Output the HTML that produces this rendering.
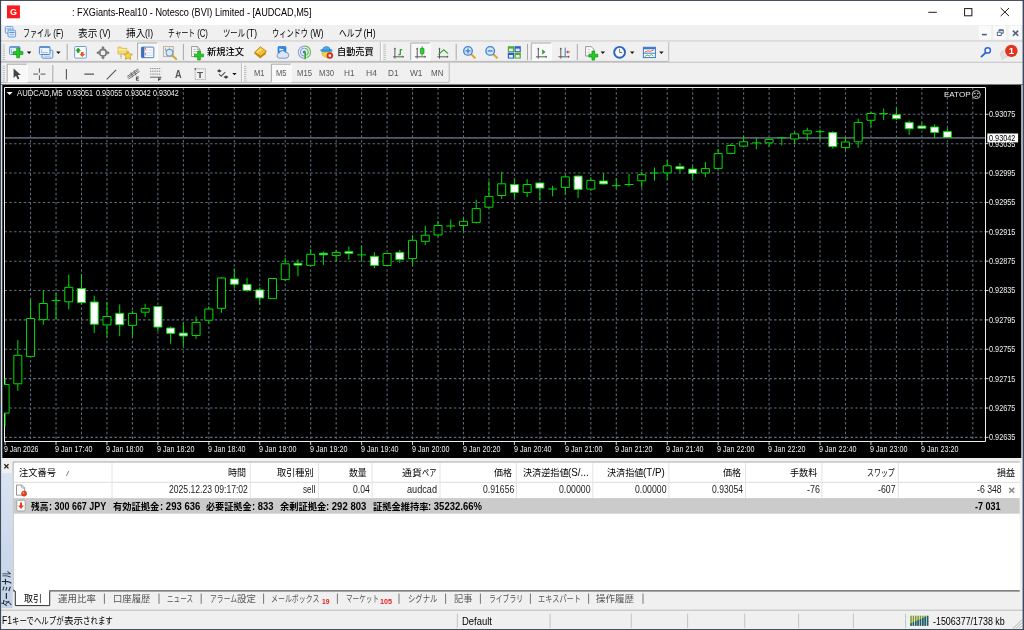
<!DOCTYPE html>
<html lang="ja"><head><meta charset="utf-8"><title>FXGiants-Real10 - Notesco (BVI) Limited - [AUDCAD,M5]</title>
<style>
html,body{margin:0;padding:0;background:#fff;}
body{width:1024px;height:630px;overflow:hidden;position:relative;font-family:"Liberation Sans","Noto Sans CJK JP",sans-serif;}
#win{will-change:transform;position:absolute;left:0;top:0;width:1024px;height:630px;overflow:hidden;background:#f0f0f0;}
.t{position:absolute;white-space:pre;line-height:1;transform-origin:0 0;display:inline-block;}
.bm{display:inline-block;width:0;height:0;}
.r{display:inline-block;transform-origin:0 0;white-space:pre;}
.a{position:absolute;}
svg{position:absolute;overflow:visible;}
svg.chart{left:0;top:85px;overflow:hidden;}
</style></head>
<body>
<div id="win">
<div id="titlebar" class="a" style="left:0;top:0;width:1024px;height:24.7px;background:#fff">
<svg style="left:6px;top:4px" width="16" height="16" viewBox="6 4 16 16" ><rect x="7" y="5.4" width="12.9" height="12.9" fill="#fb1a1e"/><text x="13.4" y="14.7" font-size="9" font-weight="bold" fill="#fff" text-anchor="middle" font-family="'Liberation Sans','Noto Sans CJK JP',sans-serif">G</text></svg>
<span class="t" style="left:72.00px;top:6.90px;font-size:11px;color:#000;"><span class="r" style="width:239.50px;transform:scaleX(0.8318)">: FXGiants-Real10 - Notesco (BVI) Limited - [AUDCAD,M5]</span></span>
<svg style="left:920px;top:0px" width="100" height="24" viewBox="920 0 100 24" ><g stroke="#111" stroke-width="0.95" fill="none"><path d="M928.3 12.3H936.8"/><rect x="964.6" y="8.6" width="7.3" height="7.2"/><path d="M1000.7 8L1009 16.1M1009 8L1000.7 16.1"/></g></svg>
</div>
<div id="menubar" class="a" style="left:0;top:24.7px;width:1024px;height:15.7px;background:#f0f0f0">
</div>
<svg style="left:4px;top:25px" width="14" height="14" viewBox="4 25 14 14" ><g fill="#eaf2fc" stroke="#5b8fd6" stroke-width="0.9"><rect x="5.3" y="26.6" width="7.6" height="6.6" rx="1"/><rect x="8" y="30.2" width="7.6" height="6.8" rx="1"/></g><path d="M6.5 29h5M9.3 32.4h5.2" stroke="#5b8fd6" stroke-width="1.1"/><path d="M9.6 34.6h4.6" stroke="#9cc0ee" stroke-width="1.6"/></svg>
<span class="t" style="left:23.00px;top:28.60px;font-size:10px;color:#000;"><span class="r" style="width:28.04px;transform:scaleX(0.7011)">ファイル</span><span class="r" style="width:12.46px;transform:scaleX(0.8012)"> (F)</span></span>
<span class="t" style="left:78.00px;top:28.60px;font-size:10px;color:#000;"><span class="r" style="width:19.31px;transform:scaleX(0.9656)">表示</span><span class="r" style="width:13.69px;transform:scaleX(0.8497)"> (V)</span></span>
<span class="t" style="left:126.00px;top:28.60px;font-size:10px;color:#000;"><span class="r" style="width:19.42px;transform:scaleX(0.9711)">挿入</span><span class="r" style="width:8.08px;transform:scaleX(0.8546)">(I)</span></span>
<span class="t" style="left:168.00px;top:28.60px;font-size:10px;color:#000;"><span class="r" style="width:27.07px;transform:scaleX(0.6784)">チャート</span><span class="r" style="width:12.93px;transform:scaleX(0.7753)"> (C)</span></span>
<span class="t" style="left:222.50px;top:28.60px;font-size:10px;color:#000;"><span class="r" style="width:21.98px;transform:scaleX(0.7327)">ツール</span><span class="r" style="width:13.02px;transform:scaleX(0.8374)"> (T)</span></span>
<span class="t" style="left:272.00px;top:28.60px;font-size:10px;color:#000;"><span class="r" style="width:35.97px;transform:scaleX(0.7194)">ウィンドウ</span><span class="r" style="width:15.53px;transform:scaleX(0.8222)"> (W)</span></span>
<span class="t" style="left:338.50px;top:28.60px;font-size:10px;color:#000;"><span class="r" style="width:22.93px;transform:scaleX(0.7645)">ヘルプ</span><span class="r" style="width:14.57px;transform:scaleX(0.8737)"> (H)</span></span>
<svg style="left:976px;top:25px" width="48" height="16" viewBox="976 25 48 16" ><g fill="#fafafa"><rect x="978.8" y="26" width="12.3" height="13.4"/><rect x="993.7" y="26" width="12.4" height="13.4"/><rect x="1008.9" y="26" width="12.4" height="13.4"/></g><g stroke="#4d6384" fill="none"><path d="M981.9 34.6h4.9" stroke-width="1.6"/><path d="M997.3 32.2h4v3.3h-4z" stroke-width="1"/><path d="M999 31.6v-1.6h4.2v3.3h-1.6" stroke-width="1"/><path d="M998.8 30.1h4.6" stroke-width="1.3"/><path d="M1012.9 30.6l5.3 5.2M1018.2 30.6l-5.3 5.2" stroke-width="1.6"/></g></svg>
<div class="a" style="left:0px;top:40.4px;width:1024px;height:0.8px;background:#fff"></div>
<div class="a" style="left:0px;top:62px;width:1024px;height:0.8px;background:#fff"></div>
<svg style="left:0px;top:40px" width="1024" height="23" viewBox="0 40 1024 23" ><path d="M0 40.9H1024" stroke="#c4c4c4" stroke-width="1"/><path d="M0 61.4H668.7V42" stroke="#b4b4b4" stroke-width="0.9" fill="none"/><path d="M380.4 42V61" stroke="#b4b4b4" stroke-width="0.9"/><path d="M381.4 42V61" stroke="#fff" stroke-width="0.9"/><rect x="2.6" y="44.4" width="2.4" height="0.9" fill="#b8b8b8"/><rect x="2.6" y="46.5" width="2.4" height="0.9" fill="#b8b8b8"/><rect x="2.6" y="48.6" width="2.4" height="0.9" fill="#b8b8b8"/><rect x="2.6" y="50.7" width="2.4" height="0.9" fill="#b8b8b8"/><rect x="2.6" y="52.8" width="2.4" height="0.9" fill="#b8b8b8"/><rect x="2.6" y="54.9" width="2.4" height="0.9" fill="#b8b8b8"/><rect x="2.6" y="57.0" width="2.4" height="0.9" fill="#b8b8b8"/><rect x="2.6" y="59.1" width="2.4" height="0.9" fill="#b8b8b8"/><rect x="383.4" y="44.4" width="2.4" height="0.9" fill="#b8b8b8"/><rect x="383.4" y="46.5" width="2.4" height="0.9" fill="#b8b8b8"/><rect x="383.4" y="48.6" width="2.4" height="0.9" fill="#b8b8b8"/><rect x="383.4" y="50.7" width="2.4" height="0.9" fill="#b8b8b8"/><rect x="383.4" y="52.8" width="2.4" height="0.9" fill="#b8b8b8"/><rect x="383.4" y="54.9" width="2.4" height="0.9" fill="#b8b8b8"/><rect x="383.4" y="57.0" width="2.4" height="0.9" fill="#b8b8b8"/><rect x="383.4" y="59.1" width="2.4" height="0.9" fill="#b8b8b8"/><rect x="9.6" y="46.6" width="10.4" height="7.9" rx="1" fill="#e6f0fb" stroke="#5b8fd6" stroke-width="1"/><path d="M9.6 47.3h10.4" stroke="#6b9be0" stroke-width="1.5"/><path d="M11.5 49.2v3.8h4" stroke="#7aa0cc" stroke-width="0.7" fill="none"/><path d="M16.700000000000003 48.2h2.8v3.4h3.4v2.8h-3.4v3.4h-2.8v-3.4h-3.4v-2.8h3.4z" fill="#22cc22" stroke="#0f9414" stroke-width="0.7" stroke-linejoin="round"/><path d="M26.9 51.6h4.4l-2.2 2.3z" fill="#111"/><rect x="42" y="50.2" width="10.8" height="8" rx="1" fill="#e6f0fb" stroke="#5b8fd6" stroke-width="1"/><rect x="39.4" y="46.6" width="10.6" height="7.9" rx="1" fill="#eef5fd" stroke="#4f86d0" stroke-width="1"/><path d="M39.4 47.3h10.6" stroke="#5a8fdc" stroke-width="1.5"/><path d="M41.4 49.4v3.2h6.4" stroke="#7aa0cc" stroke-width="0.7" fill="none"/><path d="M44.3 56.2h6.4" stroke="#9bbbe0" stroke-width="0.9" fill="none"/><path d="M56.2 51.6h4.4l-2.2 2.3z" fill="#111"/><path d="M67.2 43.9V60.2" stroke="#a8a8a8" stroke-width="1"/><rect x="74.7" y="46.5" width="11.6" height="11.6" rx="1" fill="#fff" stroke="#6a9edc" stroke-width="1"/><path d="M78.2 47.8l2.9 2.9h-1.6v2h-2.6v-2h-1.6z" fill="#1fa01f"/><path d="M82.3 57l2.9-2.9h-1.6v-2h-2.6v2h-1.6z" fill="#e8582a"/><g stroke="#7a7a7a" fill="none"><circle cx="103" cy="52.7" r="3.3" stroke-width="1.6"/><path d="M97.4 52.7h3.2M105.4 52.7h3.2M103 47.1v3.2M103 55.1v3.2" stroke-width="1.7"/></g><path d="M96.3 52.7l2.2-2v4zM109.7 52.7l-2.2-2v4zM103 46l-2 2.2h4zM103 59.4l-2-2.2h4z" fill="#7a7a7a"/><path d="M118 47.2h3.2l1 1.2h4.6v5.6H118z" fill="#f4dc78" stroke="#d8b43c" stroke-width="0.8"/><path d="M118.3 49.6h8.2" stroke="#fbf0b4" stroke-width="1"/><path d="M121 54.5v4" stroke="#444" stroke-width="0.8" stroke-dasharray="1 0.8"/><path d="M128.1 51.2l1.3 2.7 3 .4-2.2 2.1.5 3-2.6-1.4-2.7 1.4.5-3-2.1-2.1 3-.4z" fill="#f7d348" stroke="#c89a1c" stroke-width="0.8" stroke-linejoin="round"/><rect x="137.6" y="43" width="19.80000000000001" height="17.200000000000003" fill="#f8f8f8"/><path d="M137.6 60.2V43H157.4" stroke="#a0a0a0" stroke-width="0.9" fill="none"/><path d="M157.4 43V60.2H137.6" stroke="#fff" stroke-width="0.9" fill="none"/><rect x="141.4" y="47.1" width="12.4" height="10.6" rx="0.8" fill="#fff" stroke="#4a7ec4" stroke-width="1"/><rect x="141.4" y="47.1" width="3" height="10.6" fill="#3a6fb5"/><path d="M144.6 50.2h9M144.6 52.8h9M144.6 55.3h9" stroke="#c4d8f2" stroke-width="0.9"/><rect x="144.9" y="48.3" width="1.2" height="1.2" fill="#e03030"/><rect x="144.9" y="53.4" width="1.2" height="1.2" fill="#e03030"/><rect x="163.5" y="46.6" width="9.8" height="10" fill="#f4efe2" stroke="#b8ae94" stroke-width="0.9"/><path d="M165.5 48v3M169.3 47.6v2.4" stroke="#888" stroke-width="0.7"/><circle cx="169.5" cy="52.7" r="3.3" fill="#d8e8f8" fill-opacity="0.85" stroke="#6a9edc" stroke-width="1.2"/><path d="M172 55.3l4.2 3.7" stroke="#d2a52c" stroke-width="1.9" stroke-linecap="round"/><path d="M183.4 43.9V60.2" stroke="#a8a8a8" stroke-width="1"/><path d="M191.6 46.6h5.6l2.8 2.8v7.2h-8.4z" fill="#fff" stroke="#8a8a8a" stroke-width="0.9"/><path d="M197.2 46.6v2.8h2.8" fill="none" stroke="#8a8a8a" stroke-width="0.7"/><path d="M193.3 49.4h2.6M193.3 51.4h3.6M193.3 53.4h2" stroke="#a8a8a8" stroke-width="0.8"/><path d="M197.65 51.0h2.7v3.15h3.15v2.7h-3.15v3.15h-2.7v-3.15h-3.15v-2.7h3.15z" fill="#22cc22" stroke="#0f9414" stroke-width="0.7" stroke-linejoin="round"/><path d="M254 53.2l6.2-6.2 6.3 4.6-1 2.6-5.3 4.4z" fill="#c48c20"/><path d="M254.6 52.2l5.8-5.4 6 4.4-5.6 5z" fill="#f0c02c" stroke="#b47c18" stroke-width="0.7"/><path d="M256.2 52.2l4.4-4 1.6 1.2-4.4 4z" fill="#f8dc70"/><rect x="278" y="46.5" width="8" height="7" rx="0.8" fill="#2a8ae6" stroke="#1a6cc8" stroke-width="0.6"/><path d="M280 48.4v2.6M280.3 49.6h3" stroke="#fff" stroke-width="1"/><path d="M279 58.2a2.6 2.6 0 0 1 .3-5.1 3.4 3.4 0 0 1 6.2-.7 2.9 2.9 0 0 1 3.2 2.9 2.8 2.8 0 0 1-2.7 2.9z" fill="#dde7f3" stroke="#6f90c4" stroke-width="0.9"/><g fill="none" stroke-width="1.15"><path d="M304.4 58.3a6.1 6.1 0 0 1 0-12.2" stroke="#93a9d4"/><path d="M304.4 56a3.9 3.9 0 0 1 0-7.8" stroke="#7f9fdc"/><path d="M304.4 46.1a6.1 6.1 0 0 1 2.4 11.7" stroke="#62bc62"/><path d="M304.4 48.2a3.9 3.9 0 0 1 2.2 7" stroke="#62bc62"/></g><circle cx="304.3" cy="52" r="1.6" fill="#3a78d0"/><path d="M305.2 52.8v5.6" stroke="#2fa82f" stroke-width="1.7" stroke-linecap="round"/><path d="M321.5 51.2l1.2 4.4 5 2.6 3.4-2.4.6-4.6z" fill="#f2d04a" stroke="#d0a420" stroke-width="0.6"/><ellipse cx="326.4" cy="50.3" rx="6.2" ry="1.9" fill="#3f9edc"/><path d="M322.6 50.2a3.8 3.6 0 0 1 7.6 0z" fill="#4aa8e4" stroke="#2a7cc0" stroke-width="0.6"/><circle cx="329.9" cy="55.6" r="3" fill="#e03020" stroke="#b81c10" stroke-width="0.5"/><rect x="328.7" y="54.4" width="2.4" height="2.4" fill="#fff"/><path d="M394.9 48.4V58.6M393 56.8H403.4" stroke="#5a5a5a" stroke-width="1" fill="none"/><path d="M394.9 47.6l-1.2 1.6h2.4zM404.2 56.8l-1.6-1.2v2.4z" fill="#5a5a5a"/><path d="M400.3 49.3v5.8M400.3 49.6h1.8M398.4 54.6h1.9" stroke="#22a022" stroke-width="1.2" fill="none"/><rect x="410.7" y="43" width="19.30000000000001" height="17.200000000000003" fill="#f8f8f8"/><path d="M410.7 60.2V43H430" stroke="#a0a0a0" stroke-width="0.9" fill="none"/><path d="M430 43V60.2H410.7" stroke="#fff" stroke-width="0.9" fill="none"/><path d="M417.2 48.4V58.6M415 56.8H425.4" stroke="#5a5a5a" stroke-width="1" fill="none"/><path d="M417.2 47.6l-1.2 1.6h2.4zM426.2 56.8l-1.6-1.2v2.4z" fill="#5a5a5a"/><path d="M422.1 46.4v9.4" stroke="#22a022" stroke-width="1"/><rect x="420.3" y="48.3" width="3.7" height="5.4" rx="0.6" fill="#2fd02f" stroke="#159015" stroke-width="0.7"/><path d="M439.5 48.4V58.6M437.4 56.8H447.8" stroke="#5a5a5a" stroke-width="1" fill="none"/><path d="M439.5 47.6l-1.2 1.6h2.4zM448.6 56.8l-1.6-1.2v2.4z" fill="#5a5a5a"/><path d="M438.4 54.6l5.3-4.9 4.4 3.9" stroke="#32a832" stroke-width="1.2" fill="none"/><path d="M456.2 43.9V60.2" stroke="#a8a8a8" stroke-width="1"/><path d="M471.4 54.4l3.4 3.4" stroke="#d6ac34" stroke-width="2.1" stroke-linecap="round"/><circle cx="468" cy="50.9" r="4.3" fill="#d4e6f8" stroke="#3d80d2" stroke-width="1.3"/><path d="M465.5 50.9h5" stroke="#3d80d2" stroke-width="1.3"/><path d="M468 48.4v5" stroke="#3d80d2" stroke-width="1.3"/><path d="M493.59999999999997 54.4l3.4 3.4" stroke="#d6ac34" stroke-width="2.1" stroke-linecap="round"/><circle cx="490.2" cy="50.9" r="4.3" fill="#d4e6f8" stroke="#3d80d2" stroke-width="1.3"/><path d="M487.7 50.9h5" stroke="#3d80d2" stroke-width="1.3"/><rect x="507.8" y="46.2" width="6.3" height="6" fill="#52a836"/><rect x="514.5" y="46.2" width="6.3" height="6" fill="#2b60c4"/><rect x="507.8" y="52.6" width="6.3" height="6" fill="#2b60c4"/><rect x="514.5" y="52.6" width="6.3" height="6" fill="#52a836"/><g fill="#e4eefa"><rect x="509" y="48.6" width="3.9" height="2.6"/><rect x="515.7" y="48.6" width="3.9" height="2.6"/><rect x="509" y="55" width="3.9" height="2.6"/><rect x="515.7" y="55" width="3.9" height="2.6"/></g><path d="M527.5 43.9V60.2" stroke="#a8a8a8" stroke-width="1"/><rect x="531.3" y="43" width="19.90000000000009" height="17.200000000000003" fill="#f8f8f8"/><path d="M531.3 60.2V43H551.2" stroke="#a0a0a0" stroke-width="0.9" fill="none"/><path d="M551.2 43V60.2H531.3" stroke="#fff" stroke-width="0.9" fill="none"/><path d="M538.3 48.4V58.6M536 56.8H546.5" stroke="#5a5a5a" stroke-width="1" fill="none"/><path d="M538.3 47.6l-1.2 1.6h2.4zM547.3 56.8l-1.6-1.2v2.4z" fill="#5a5a5a"/><path d="M542.2 49.2l3.3 2.8-3.3 2.8z" fill="#2aa82a"/><path d="M560.8 48.4V58.6M558.4 56.8H568.9" stroke="#5a5a5a" stroke-width="1" fill="none"/><path d="M560.8 47.6l-1.2 1.6h2.4zM569.6999999999999 56.8l-1.6-1.2v2.4z" fill="#5a5a5a"/><path d="M565.2 47.6v8.4" stroke="#3a78c8" stroke-width="1"/><path d="M566 52l2.2-1.8v1.2h1.6v1.2h-1.6v1.2z" fill="#d8481c"/><path d="M577.3 43.9V60.2" stroke="#a8a8a8" stroke-width="1"/><path d="M585.6 46.6h5.4l3 2.8v6.6h-8.4z" fill="#fff" stroke="#8a8a8a" stroke-width="0.9"/><path d="M587.6 49.6c1 -1.6 1.6 1.6 2.6 0M587.6 52.4c1 -1.6 1.6 1.6 2.6 0" stroke="#999" stroke-width="0.7" fill="none"/><path d="M591.9499999999999 51.1h2.7v3.15h3.15v2.7h-3.15v3.15h-2.7v-3.15h-3.15v-2.7h3.15z" fill="#22cc22" stroke="#0f9414" stroke-width="0.7" stroke-linejoin="round"/><path d="M600.6 51.6h4.4l-2.2 2.3z" fill="#111"/><circle cx="619.6" cy="52.3" r="5.4" fill="#f6f9fd" stroke="#2a62c4" stroke-width="1.9"/><path d="M619.6 48.8v3.7h2.6" stroke="#555" stroke-width="0.8" fill="none"/><path d="M630 51.6h4.4l-2.2 2.3z" fill="#111"/><rect x="643.4" y="47.3" width="12" height="10.3" fill="#fff" stroke="#3a78cc" stroke-width="1"/><rect x="643.4" y="47.3" width="12" height="2" fill="#3a78cc"/><path d="M643.4 53.2h12" stroke="#3a78cc" stroke-width="1"/><path d="M644.8 52.2l3-1.4 2.4.6 3.6-1.4" stroke="#d8502c" stroke-width="0.9" fill="none"/><path d="M644.8 56.6l2.4-1.6 2 1 2-1.4 2.4 1.6" stroke="#38a838" stroke-width="0.9" fill="none"/><path d="M659.2 51.6h4.4l-2.2 2.3z" fill="#111"/><circle cx="987.7" cy="50.4" r="2.7" fill="#f4f8fe" stroke="#2f64d4" stroke-width="1.5"/><path d="M985.7 52.6l-4.2 4" stroke="#2f64d4" stroke-width="1.9" stroke-linecap="round"/><path d="M1000.6 54.2a3.8 3.4 0 0 1 7.6 0a3.8 3.4 0 0 1-3.6 3.4l-2.4 2v-2.2a3.8 3.4 0 0 1-1.6-3.2z" fill="#e2e2e2" stroke="#c0c0c0" stroke-width="0.5"/><circle cx="1011.4" cy="50.9" r="6.2" fill="#e2331f"/><text x="1011.4" y="54.3" font-size="9.5" font-weight="bold" fill="#fff" text-anchor="middle" font-family="'Liberation Sans','Noto Sans CJK JP',sans-serif">1</text></svg>
<span class="t" style="left:206.80px;top:47.20px;font-size:9.5px;color:#000;font-weight:500;"><span class="r" style="width:37.00px;transform:scaleX(0.9733)">新規注文</span></span>
<span class="t" style="left:337.40px;top:47.20px;font-size:9.5px;color:#000;font-weight:500;"><span class="r" style="width:36.60px;transform:scaleX(0.9628)">自動売買</span></span>
<svg style="left:0px;top:62px" width="1024" height="23" viewBox="0 62 1024 23" ><path d="M0 62.3H1024" stroke="#b8b8b8" stroke-width="0.9"/><path d="M0 83.2H1024" stroke="#fff" stroke-width="1"/><path d="M0 84.4H1024" stroke="#6e6e6e" stroke-width="1"/><path d="M0 82.4H449.2V63" stroke="#b4b4b4" stroke-width="0.9" fill="none"/><path d="M241.6 63V82" stroke="#b4b4b4" stroke-width="0.9"/><path d="M242.6 63V82" stroke="#fff" stroke-width="0.9"/><rect x="2.6" y="65.8" width="2.4" height="0.9" fill="#b8b8b8"/><rect x="2.6" y="67.9" width="2.4" height="0.9" fill="#b8b8b8"/><rect x="2.6" y="70.0" width="2.4" height="0.9" fill="#b8b8b8"/><rect x="2.6" y="72.1" width="2.4" height="0.9" fill="#b8b8b8"/><rect x="2.6" y="74.2" width="2.4" height="0.9" fill="#b8b8b8"/><rect x="2.6" y="76.3" width="2.4" height="0.9" fill="#b8b8b8"/><rect x="2.6" y="78.4" width="2.4" height="0.9" fill="#b8b8b8"/><rect x="2.6" y="80.5" width="2.4" height="0.9" fill="#b8b8b8"/><rect x="244" y="65.8" width="2.4" height="0.9" fill="#b8b8b8"/><rect x="244" y="67.9" width="2.4" height="0.9" fill="#b8b8b8"/><rect x="244" y="70.0" width="2.4" height="0.9" fill="#b8b8b8"/><rect x="244" y="72.1" width="2.4" height="0.9" fill="#b8b8b8"/><rect x="244" y="74.2" width="2.4" height="0.9" fill="#b8b8b8"/><rect x="244" y="76.3" width="2.4" height="0.9" fill="#b8b8b8"/><rect x="244" y="78.4" width="2.4" height="0.9" fill="#b8b8b8"/><rect x="244" y="80.5" width="2.4" height="0.9" fill="#b8b8b8"/><rect x="7.2" y="64.2" width="20.0" height="17.799999999999997" fill="#f8f8f8"/><path d="M7.2 82V64.2H27.2" stroke="#a0a0a0" stroke-width="0.9" fill="none"/><path d="M27.2 64.2V82H7.2" stroke="#fff" stroke-width="0.9" fill="none"/><path d="M13.6 68.4v9.6l2.4-2.2 1.7 3.6 1.7-.8-1.7-3.5h3.2z" fill="#444"/><path d="M39.4 68.4v4.4M39.4 75.4v4.6M33.3 74.1h4.8M40.6 74.1h4.8" stroke="#555" stroke-width="1" fill="none"/><path d="M52.8 65V82" stroke="#a8a8a8" stroke-width="1"/><path d="M66.4 68.9v10.5M84.4 74.1h9.6" stroke="#555" stroke-width="1.1"/><path d="M106.7 79.3l9.4-9.4" stroke="#555" stroke-width="1.1"/><g stroke="#666" stroke-width="0.9" fill="none"><path d="M127.2 76.4l11-7.6M128.6 79l11-7.6M127.6 77.8l11-7.6"/><path d="M130.8 72.4l2 5M134 70.4l2 5"/></g><path d="M136.2 77h2.8M136.2 78.6h2.2M136.2 80.2h2.8M136.4 77v3.2" stroke="#444" stroke-width="0.9" fill="none"/><g stroke="#777" stroke-width="0.9"><path d="M150 68.6h11.2M150 71.2h11.2M150 74.1h11.2" stroke-dasharray="1.3 0.9"/><path d="M150 77.2h11.2" stroke="#555"/></g><path d="M158.4 78h2.8M158.4 79.5h2.2M158.6 78v3" stroke="#444" stroke-width="0.9" fill="none"/><rect x="195.2" y="68.8" width="10.2" height="10.8" fill="none" stroke="#888" stroke-width="0.8" stroke-dasharray="1.1 0.9"/><rect x="194.6" y="68.2" width="1.5" height="1.5" fill="#555"/><path d="M219.3 69.2l2.4 1.7-2.4 1.7-2.4-1.7zM226 75.4l2.6 1.7-2.6 1.7-2.6-1.7z" fill="#444"/><path d="M219 74.2l2.2 2 4-4" stroke="#555" stroke-width="1.1" fill="none"/><path d="M232.2 73h4.4l-2.2 2.3z" fill="#111"/><rect x="271.4" y="64.2" width="19.600000000000023" height="17.799999999999997" fill="#f8f8f8"/><path d="M271.4 82V64.2H291" stroke="#a0a0a0" stroke-width="0.9" fill="none"/><path d="M291 64.2V82H271.4" stroke="#fff" stroke-width="0.9" fill="none"/></svg>
<span class="t" style="left:174.70px;top:69.60px;font-size:10.4px;color:#555;font-weight:bold;"><span class="r" style="width:6.60px;transform:scaleX(0.8782)">A</span></span>
<span class="t" style="left:197.30px;top:70.30px;font-size:9.6px;color:#555;font-weight:bold;"><span class="r" style="width:6.10px;transform:scaleX(1.0383)">T</span></span>
<span class="t" style="left:253.50px;top:69.20px;font-size:8.5px;color:#585858;"><span class="r" style="width:10.50px;transform:scaleX(0.8889)">M1</span></span>
<span class="t" style="left:276.00px;top:69.20px;font-size:8.5px;color:#585858;"><span class="r" style="width:10.50px;transform:scaleX(0.8889)">M5</span></span>
<span class="t" style="left:296.50px;top:69.20px;font-size:8.5px;color:#585858;"><span class="r" style="width:15.00px;transform:scaleX(0.9065)">M15</span></span>
<span class="t" style="left:318.50px;top:69.20px;font-size:8.5px;color:#585858;"><span class="r" style="width:15.00px;transform:scaleX(0.9065)">M30</span></span>
<span class="t" style="left:343.50px;top:69.20px;font-size:8.5px;color:#585858;"><span class="r" style="width:10.50px;transform:scaleX(0.9655)">H1</span></span>
<span class="t" style="left:365.50px;top:69.20px;font-size:8.5px;color:#585858;"><span class="r" style="width:11.00px;transform:scaleX(1.0115)">H4</span></span>
<span class="t" style="left:388.00px;top:69.20px;font-size:8.5px;color:#585858;"><span class="r" style="width:10.50px;transform:scaleX(0.9655)">D1</span></span>
<span class="t" style="left:410.00px;top:69.20px;font-size:8.5px;color:#585858;"><span class="r" style="width:12.50px;transform:scaleX(0.9804)">W1</span></span>
<span class="t" style="left:431.00px;top:69.20px;font-size:8.5px;color:#585858;"><span class="r" style="width:12.50px;transform:scaleX(0.9445)">MN</span></span>
<svg class="chart" width="1024" height="374" viewBox="0 85 1024 374">
<rect x="0" y="85" width="1024" height="374" fill="#f0f0f0"/>
<rect x="2.3" y="85" width="1019" height="373" fill="#000"/>
<path d="M4.5 114.30H986M4.5 143.67H986M4.5 173.04H986M4.5 202.41H986M4.5 231.78H986M4.5 261.15H986M4.5 290.52H986M4.5 319.89H986M4.5 349.26H986M4.5 378.63H986M4.5 408.00H986M4.5 437.37H986M30.57 87.5V441.5M56.03 87.5V441.5M81.50 87.5V441.5M106.96 87.5V441.5M132.43 87.5V441.5M157.90 87.5V441.5M183.36 87.5V441.5M208.83 87.5V441.5M234.29 87.5V441.5M259.76 87.5V441.5M285.23 87.5V441.5M310.69 87.5V441.5M336.16 87.5V441.5M361.62 87.5V441.5M387.09 87.5V441.5M412.56 87.5V441.5M438.02 87.5V441.5M463.49 87.5V441.5M488.95 87.5V441.5M514.42 87.5V441.5M539.89 87.5V441.5M565.35 87.5V441.5M590.82 87.5V441.5M616.28 87.5V441.5M641.75 87.5V441.5M667.22 87.5V441.5M692.68 87.5V441.5M718.15 87.5V441.5M743.61 87.5V441.5M769.08 87.5V441.5M794.55 87.5V441.5M820.01 87.5V441.5M845.48 87.5V441.5M870.94 87.5V441.5M896.41 87.5V441.5M921.88 87.5V441.5M947.34 87.5V441.5M972.81 87.5V441.5" stroke="#5e6c7e" stroke-width="1.05" stroke-dasharray="2.5 2.28" fill="none"/>
<path d="M4.5 442V87.5H985.5V441.5H4.5" stroke="#f0f0f0" stroke-width="1" fill="none"/>
<path d="M5 137.8H985" stroke="#525e6e" stroke-width="1.7" fill="none"/>
<clipPath id="cc"><rect x="4" y="86" width="983" height="356"/></clipPath>
<g clip-path="url(#cc)" stroke="#00dc00" stroke-width="1" fill="none">
<path d="M5.10 378.30V384.40M5.10 413.20V426.70M17.83 340.00V355.20M17.83 383.90V390.80M30.57 299.40V318.40M43.30 290.50V303.40M43.30 319.70V324.80M56.03 292.50V319.70M51.63 300.60H60.43M68.77 274.50V287.20M68.77 301.90V309.50M81.50 274.50V288.40M81.50 302.70V304.40M94.23 295.60V301.90M94.23 324.30V333.10M106.96 301.90V316.40M106.96 325.00V337.00M119.70 304.40V313.30M119.70 324.80V336.20M132.43 310.80V313.30M132.43 325.50V337.00M145.16 303.70V308.30M145.16 312.30V317.10M157.90 327.20V331.00M170.63 326.70V327.90M170.63 333.50V343.70M183.36 322.30V333.00M183.36 336.00V346.20M196.09 316.50V322.30M196.09 335.60V338.90M208.83 306.30V308.90M208.83 320.30V323.60M221.56 277.00V277.90M221.56 308.40V312.70M234.29 268.30V278.90M234.29 284.30V288.00M247.03 277.90V284.30M247.03 290.60V291.90M259.76 287.30V289.80M259.76 298.00V304.60M285.23 258.10V263.70M285.23 279.70V281.00M297.96 259.40V263.20M297.96 265.20V276.40M310.69 249.00V254.20M310.69 265.40V266.80M323.43 251.60V253.10M323.43 254.90V264.80M336.16 249.80V252.30M336.16 255.70V261.70M348.89 246.50V251.60M348.89 253.40V259.70M361.62 246.00V260.50M357.22 254.90H366.02M374.36 252.30V256.20M374.36 265.60V268.10M399.82 249.80V252.30M399.82 259.70V263.00M412.56 235.10V240.20M412.56 258.70V265.60M425.29 225.70V235.10M425.29 241.40V245.20M438.02 221.10V225.40M438.02 235.10V236.30M450.76 219.50V229.70M446.36 226.00H455.16M463.49 217.90V221.20M463.49 225.60V231.40M476.22 199.70V208.50M476.22 222.50V223.50M488.95 181.10V196.30M488.95 207.30V208.50M501.69 171.70V183.70M501.69 195.60V198.90M514.42 178.60V184.40M514.42 192.50V198.10M527.15 179.10V184.40M527.15 192.50V197.10M539.89 181.90V182.90M539.89 188.20V200.70M552.62 185.70V196.30M548.22 189.00H557.02M565.35 175.50V176.80M565.35 187.50V194.60M578.09 175.30V176.00M578.09 189.50V198.10M590.82 177.30V180.30M590.82 189.20V190.80M603.55 173.30V180.90M603.55 184.00V184.50M616.28 178.10V189.00M611.88 185.70H620.68M629.02 173.80V186.50M624.62 184.50H633.42M641.75 171.80V174.60M641.75 180.90V187.80M654.48 167.50V180.70M650.08 173.00H658.88M667.22 159.80V165.70M667.22 173.00V179.70M679.95 163.10V166.40M679.95 169.00V173.30M692.68 166.20V169.00M692.68 173.60V178.90M705.42 161.90V168.50M705.42 173.00V177.10M718.15 148.90V153.50M718.15 168.50V169.50M730.88 143.80V145.40M730.88 153.50V154.30M743.61 135.80V141.70M743.61 146.20V147.20M756.35 137.80V149.30M751.95 142.90H760.75M769.08 138.30V139.30M769.08 142.90V146.70M781.81 137.80V145.40M777.41 137.80H786.21M794.55 132.00V133.80M794.55 139.10V144.20M807.28 127.70V130.70M807.28 134.00V140.40M820.01 129.40V140.40M815.61 131.70H824.41M832.75 131.20V132.50M832.75 146.70V148.50M845.48 137.00V141.90M845.48 147.70V150.30M858.21 118.80V122.30M858.21 141.90V147.70M870.94 111.70V113.40M870.94 120.40V126.90M883.68 108.40V120.00M879.28 113.60H888.08M896.41 107.90V114.70M896.41 118.80V120.00M909.14 120.60V122.30M909.14 128.90V135.00M921.88 122.60V125.90M921.88 128.40V129.00M934.61 124.40V126.90M934.61 132.50V138.30M947.34 128.20V131.50M947.34 137.60V138.00"/>
<path d="M1.10 384.50H9.10V413.10H1.10ZM13.83 355.30H21.83V383.80H13.83ZM26.57 318.50H34.57V356.40H26.57ZM39.30 303.50H47.30V319.60H39.30ZM64.77 287.30H72.77V301.80H64.77ZM102.96 316.50H110.96V324.90H102.96ZM128.43 313.40H136.43V325.40H128.43ZM141.16 308.40H149.16V312.20H141.16ZM192.09 322.40H200.09V335.50H192.09ZM204.83 309.00H212.83V320.20H204.83ZM217.56 278.00H225.56V308.30H217.56ZM268.49 278.50H276.49V298.60H268.49ZM281.23 263.80H289.23V279.60H281.23ZM306.69 254.30H314.69V265.30H306.69ZM332.16 252.40H340.16V255.60H332.16ZM383.09 253.50H391.09V265.50H383.09ZM408.56 240.30H416.56V258.60H408.56ZM421.29 235.20H429.29V241.30H421.29ZM434.02 225.50H442.02V235.00H434.02ZM459.49 221.30H467.49V225.50H459.49ZM472.22 208.60H480.22V222.40H472.22ZM484.95 196.40H492.95V207.20H484.95ZM497.69 183.80H505.69V195.50H497.69ZM523.15 184.50H531.15V192.40H523.15ZM561.35 176.90H569.35V187.40H561.35ZM586.82 180.40H594.82V189.10H586.82ZM637.75 174.70H645.75V180.80H637.75ZM663.22 165.80H671.22V172.90H663.22ZM701.42 168.60H709.42V172.90H701.42ZM714.15 153.60H722.15V168.40H714.15ZM726.88 145.50H734.88V153.40H726.88ZM739.61 141.80H747.61V146.10H739.61ZM765.08 139.40H773.08V142.80H765.08ZM790.55 133.90H798.55V139.00H790.55ZM803.28 130.80H811.28V133.90H803.28ZM841.48 142.00H849.48V147.60H841.48ZM854.21 122.40H862.21V141.80H854.21ZM866.94 113.50H874.94V120.30H866.94Z" fill="#000"/>
<path d="M77.50 288.50H85.50V302.60H77.50ZM90.23 302.00H98.23V324.20H90.23ZM115.70 313.40H123.70V324.70H115.70ZM153.90 306.50H161.90V327.10H153.90ZM166.63 328.00H174.63V333.40H166.63ZM179.36 333.10H187.36V335.90H179.36ZM230.29 279.00H238.29V284.20H230.29ZM243.03 284.40H251.03V290.50H243.03ZM255.76 289.90H263.76V297.90H255.76ZM293.96 263.30H301.96V265.10H293.96ZM319.43 253.20H327.43V254.80H319.43ZM344.89 251.70H352.89V253.30H344.89ZM370.36 256.30H378.36V265.50H370.36ZM395.82 252.40H403.82V259.60H395.82ZM510.42 184.50H518.42V192.40H510.42ZM535.89 183.00H543.89V188.10H535.89ZM574.09 176.10H582.09V189.40H574.09ZM599.55 181.00H607.55V183.90H599.55ZM675.95 166.50H683.95V168.90H675.95ZM688.68 169.10H696.68V173.50H688.68ZM828.75 132.60H836.75V146.60H828.75ZM892.41 114.80H900.41V118.70H892.41ZM905.14 122.40H913.14V128.80H905.14ZM917.88 126.00H925.88V128.30H917.88ZM930.61 127.00H938.61V132.40H930.61ZM943.34 131.60H951.34V137.50H943.34Z" fill="#fff"/>
</g>
<path d="M986 114.30h2.4M986 143.67h2.4M986 173.04h2.4M986 202.41h2.4M986 231.78h2.4M986 261.15h2.4M986 290.52h2.4M986 319.89h2.4M986 349.26h2.4M986 378.63h2.4M986 408.00h2.4M986 437.37h2.4M5.10 442v3M56.03 442v3M106.96 442v3M157.90 442v3M208.83 442v3M259.76 442v3M310.69 442v3M361.62 442v3M412.56 442v3M463.49 442v3M514.42 442v3M565.35 442v3M616.28 442v3M667.22 442v3M718.15 442v3M769.08 442v3M820.01 442v3M870.94 442v3M921.88 442v3" stroke="#e8e8e8" stroke-width="0.9" fill="none"/>
<rect x="987.3" y="133.5" width="30.8" height="8.9" fill="#fff"/>
<path d="M6.6 92h6l-3 3z" fill="#fff"/>
<g stroke="#e8e8e8" stroke-width="0.8" fill="none"><circle cx="976.3" cy="94.6" r="4"/><path d="M974.4 97q1.9-2 3.8 0"/></g><circle cx="974.8" cy="93.5" r=".75" fill="#e8e8e8"/><circle cx="977.8" cy="93.5" r=".75" fill="#e8e8e8"/>
</svg>
<span class="t" style="left:16.60px;top:88.80px;font-size:8.4px;color:#f0f0f0;"><span class="r" style="width:45.50px;transform:scaleX(0.9224)">AUDCAD,M5</span></span>
<span class="t" style="left:67.40px;top:88.80px;font-size:8.4px;color:#f0f0f0;"><span class="r" style="width:26.00px;transform:scaleX(0.8586)">0.93051</span></span>
<span class="t" style="left:95.70px;top:88.80px;font-size:8.4px;color:#f0f0f0;"><span class="r" style="width:26.30px;transform:scaleX(0.8685)">0.93055</span></span>
<span class="t" style="left:124.60px;top:88.80px;font-size:8.4px;color:#f0f0f0;"><span class="r" style="width:25.80px;transform:scaleX(0.8520)">0.93042</span></span>
<span class="t" style="left:152.90px;top:88.80px;font-size:8.4px;color:#f0f0f0;"><span class="r" style="width:25.80px;transform:scaleX(0.8520)">0.93042</span></span>
<span class="t" style="left:943.80px;top:90.90px;font-size:7.8px;color:#f0f0f0;"><span class="r" style="width:26.50px;transform:scaleX(1.0304)">EATOP</span></span>
<span class="t" style="left:989.30px;top:110.20px;font-size:8.4px;color:#f0f0f0;"><span class="r" style="width:26.40px;transform:scaleX(0.8718)">0.93075</span></span>
<span class="t" style="left:989.30px;top:139.57px;font-size:8.4px;color:#f0f0f0;"><span class="r" style="width:26.40px;transform:scaleX(0.8718)">0.93035</span></span>
<span class="t" style="left:989.30px;top:168.94px;font-size:8.4px;color:#f0f0f0;"><span class="r" style="width:26.40px;transform:scaleX(0.8718)">0.92995</span></span>
<span class="t" style="left:989.30px;top:198.31px;font-size:8.4px;color:#f0f0f0;"><span class="r" style="width:26.40px;transform:scaleX(0.8718)">0.92955</span></span>
<span class="t" style="left:989.30px;top:227.68px;font-size:8.4px;color:#f0f0f0;"><span class="r" style="width:26.40px;transform:scaleX(0.8718)">0.92915</span></span>
<span class="t" style="left:989.30px;top:257.05px;font-size:8.4px;color:#f0f0f0;"><span class="r" style="width:26.40px;transform:scaleX(0.8718)">0.92875</span></span>
<span class="t" style="left:989.30px;top:286.42px;font-size:8.4px;color:#f0f0f0;"><span class="r" style="width:26.40px;transform:scaleX(0.8718)">0.92835</span></span>
<span class="t" style="left:989.30px;top:315.79px;font-size:8.4px;color:#f0f0f0;"><span class="r" style="width:26.40px;transform:scaleX(0.8718)">0.92795</span></span>
<span class="t" style="left:989.30px;top:345.16px;font-size:8.4px;color:#f0f0f0;"><span class="r" style="width:26.40px;transform:scaleX(0.8718)">0.92755</span></span>
<span class="t" style="left:989.30px;top:374.53px;font-size:8.4px;color:#f0f0f0;"><span class="r" style="width:26.40px;transform:scaleX(0.8718)">0.92715</span></span>
<span class="t" style="left:989.30px;top:403.90px;font-size:8.4px;color:#f0f0f0;"><span class="r" style="width:26.40px;transform:scaleX(0.8718)">0.92675</span></span>
<span class="t" style="left:989.30px;top:433.27px;font-size:8.4px;color:#f0f0f0;"><span class="r" style="width:26.40px;transform:scaleX(0.8718)">0.92635</span></span>
<span class="t" style="left:989.30px;top:133.90px;font-size:8.4px;color:#000;"><span class="r" style="width:26.40px;transform:scaleX(0.8718)">0.93042</span></span>
<span class="t" style="left:4.30px;top:445.20px;font-size:8.4px;color:#f0f0f0;"><span class="r" style="width:34.50px;transform:scaleX(0.8323)">9 Jan 2026</span></span>
<span class="t" style="left:55.23px;top:445.20px;font-size:8.4px;color:#f0f0f0;"><span class="r" style="width:37.50px;transform:scaleX(0.8565)">9 Jan 17:40</span></span>
<span class="t" style="left:106.16px;top:445.20px;font-size:8.4px;color:#f0f0f0;"><span class="r" style="width:37.50px;transform:scaleX(0.8565)">9 Jan 18:00</span></span>
<span class="t" style="left:157.10px;top:445.20px;font-size:8.4px;color:#f0f0f0;"><span class="r" style="width:37.50px;transform:scaleX(0.8565)">9 Jan 18:20</span></span>
<span class="t" style="left:208.03px;top:445.20px;font-size:8.4px;color:#f0f0f0;"><span class="r" style="width:37.50px;transform:scaleX(0.8565)">9 Jan 18:40</span></span>
<span class="t" style="left:258.96px;top:445.20px;font-size:8.4px;color:#f0f0f0;"><span class="r" style="width:37.50px;transform:scaleX(0.8565)">9 Jan 19:00</span></span>
<span class="t" style="left:309.89px;top:445.20px;font-size:8.4px;color:#f0f0f0;"><span class="r" style="width:37.50px;transform:scaleX(0.8565)">9 Jan 19:20</span></span>
<span class="t" style="left:360.82px;top:445.20px;font-size:8.4px;color:#f0f0f0;"><span class="r" style="width:37.50px;transform:scaleX(0.8565)">9 Jan 19:40</span></span>
<span class="t" style="left:411.76px;top:445.20px;font-size:8.4px;color:#f0f0f0;"><span class="r" style="width:37.50px;transform:scaleX(0.8565)">9 Jan 20:00</span></span>
<span class="t" style="left:462.69px;top:445.20px;font-size:8.4px;color:#f0f0f0;"><span class="r" style="width:37.50px;transform:scaleX(0.8565)">9 Jan 20:20</span></span>
<span class="t" style="left:513.62px;top:445.20px;font-size:8.4px;color:#f0f0f0;"><span class="r" style="width:37.50px;transform:scaleX(0.8565)">9 Jan 20:40</span></span>
<span class="t" style="left:564.55px;top:445.20px;font-size:8.4px;color:#f0f0f0;"><span class="r" style="width:37.50px;transform:scaleX(0.8565)">9 Jan 21:00</span></span>
<span class="t" style="left:615.48px;top:445.20px;font-size:8.4px;color:#f0f0f0;"><span class="r" style="width:37.50px;transform:scaleX(0.8565)">9 Jan 21:20</span></span>
<span class="t" style="left:666.42px;top:445.20px;font-size:8.4px;color:#f0f0f0;"><span class="r" style="width:37.50px;transform:scaleX(0.8565)">9 Jan 21:40</span></span>
<span class="t" style="left:717.35px;top:445.20px;font-size:8.4px;color:#f0f0f0;"><span class="r" style="width:37.50px;transform:scaleX(0.8565)">9 Jan 22:00</span></span>
<span class="t" style="left:768.28px;top:445.20px;font-size:8.4px;color:#f0f0f0;"><span class="r" style="width:37.50px;transform:scaleX(0.8565)">9 Jan 22:20</span></span>
<span class="t" style="left:819.21px;top:445.20px;font-size:8.4px;color:#f0f0f0;"><span class="r" style="width:37.50px;transform:scaleX(0.8565)">9 Jan 22:40</span></span>
<span class="t" style="left:870.14px;top:445.20px;font-size:8.4px;color:#f0f0f0;"><span class="r" style="width:37.50px;transform:scaleX(0.8565)">9 Jan 23:00</span></span>
<span class="t" style="left:921.08px;top:445.20px;font-size:8.4px;color:#f0f0f0;"><span class="r" style="width:37.50px;transform:scaleX(0.8565)">9 Jan 23:20</span></span>
<svg style="left:0px;top:458px" width="1024" height="172" viewBox="0 458 1024 172" ><rect x="0" y="458" width="1024" height="172" fill="#f0f0f0"/><rect x="13.2" y="462.4" width="1006.5" height="128.2" fill="#fff"/><path d="M1019.7 462H13.1V590" stroke="#a4a4a4" stroke-width="0.9" fill="none"/><linearGradient id="lg" x1="0" y1="0" x2="0" y2="1"><stop offset="0" stop-color="#d7e4f1"/><stop offset="1" stop-color="#c2d2e6"/></linearGradient><rect x="1.4" y="473.2" width="11.3" height="135" fill="url(#lg)"/><path d="M4.3 464.2l4.2 4.2M8.5 464.2l-4.2 4.2" stroke="#222" stroke-width="1.3"/><text transform="translate(10.9 606.5) rotate(-90)" font-size="10.8" font-weight="500" fill="#222a36" textLength="35.6" lengthAdjust="spacingAndGlyphs" font-family="'Liberation Sans','Noto Sans CJK JP',sans-serif">ターミナル</text><path d="M13.6 482.3H1019.7" stroke="#dcdcdc" stroke-width="1"/><path d="M112 463V498M250.3 463V498M318.4 463V498M372 463V498M440 463V498M516.4 463V498M592.8 463V498M668.9 463V498M745.5 463V498M821.9 463V498M898.4 463V498" stroke="#e4e4e4" stroke-width="1"/><rect x="13.6" y="498.1" width="1006.1" height="15.6" fill="#cbcbcb"/><path d="M16.5 485h5.2l3 3v7.2h-8.2z" fill="#fff" stroke="#8c8c8c" stroke-width="0.9"/><path d="M21.7 485v3h3" fill="none" stroke="#8c8c8c" stroke-width="0.7"/><circle cx="24.1" cy="493.6" r="2.6" fill="#e8401c" stroke="#c02c10" stroke-width="0.5"/><circle cx="23.4" cy="492.8" r="0.9" fill="#f8a080"/><rect x="16.8" y="500.2" width="8.4" height="10.8" rx="1.4" fill="#fff" stroke="#9a9a9a" stroke-width="0.9"/><path d="M20 502.4h2v3.2h2l-3 3.4-3-3.4h2z" fill="#e8401c"/><path d="M1009.2 487.9l5 4.9M1014.2 487.9l-5 4.9" stroke="#8a8a8a" stroke-width="1.5"/><path d="M13.2 590.9H1019.7" stroke="#303030" stroke-width="1"/><path d="M13.4 590l1.9 1.2v14.4h34.4v-14.7" fill="#fff" stroke="#303030" stroke-width="1"/><path d="M15.9 590.9h33.3" stroke="#fff" stroke-width="1.6"/><path d="M104.4 593.6V603.8M159 593.6V603.8M201.2 593.6V603.8M263.6 593.6V603.8M337.4 593.6V603.8M399 593.6V603.8M445.6 593.6V603.8M480.4 593.6V603.8M530.4 593.6V603.8M588.6 593.6V603.8M643 593.6V603.8" stroke="#666" stroke-width="0.9"/></svg>
<span class="t" style="left:18.80px;top:467.70px;font-size:9.4px;color:#000;"><span class="r" style="width:37.10px;transform:scaleX(0.9889)">注文番号</span></span>
<span class="t" style="left:66.00px;top:469.70px;font-size:8px;color:#777;"><span class="r" style="width:3.20px;transform:scaleX(1.4322)">/</span></span>
<span class="t" style="left:227.50px;top:467.70px;font-size:9.4px;color:#000;"><span class="r" style="width:18.10px;transform:scaleX(0.9645)">時間</span></span>
<span class="t" style="left:277.20px;top:467.70px;font-size:9.4px;color:#000;"><span class="r" style="width:36.70px;transform:scaleX(0.9783)">取引種別</span></span>
<span class="t" style="left:349.20px;top:467.70px;font-size:9.4px;color:#000;"><span class="r" style="width:17.70px;transform:scaleX(0.9432)">数量</span></span>
<span class="t" style="left:402.30px;top:467.70px;font-size:9.4px;color:#000;"><span class="r" style="width:19.83px;transform:scaleX(1.0565)">通貨</span><span class="r" style="width:14.27px;transform:scaleX(0.7607)">ペア</span></span>
<span class="t" style="left:494.10px;top:467.70px;font-size:9.4px;color:#000;"><span class="r" style="width:17.90px;transform:scaleX(0.9539)">価格</span></span>
<span class="t" style="left:522.50px;top:466.70px;font-size:9.4px;color:#000;"><span class="r" style="width:45.48px;transform:scaleX(0.9700)">決済逆指値</span><span class="r" style="font-size:10.6px;width:20.62px;transform:scaleX(0.9215)">(S/...</span></span>
<span class="t" style="left:606.90px;top:466.70px;font-size:9.4px;color:#000;"><span class="r" style="width:36.40px;transform:scaleX(0.9702)">決済指値</span><span class="r" style="font-size:10.6px;width:21.70px;transform:scaleX(0.9217)">(T/P)</span></span>
<span class="t" style="left:722.80px;top:467.70px;font-size:9.4px;color:#000;"><span class="r" style="width:18.00px;transform:scaleX(0.9592)">価格</span></span>
<span class="t" style="left:790.20px;top:467.70px;font-size:9.4px;color:#000;"><span class="r" style="width:27.30px;transform:scaleX(0.9701)">手数料</span></span>
<span class="t" style="left:867.00px;top:467.70px;font-size:9.4px;color:#000;"><span class="r" style="width:27.80px;transform:scaleX(0.7410)">スワップ</span></span>
<span class="t" style="left:996.80px;top:467.70px;font-size:9.4px;color:#000;"><span class="r" style="width:18.00px;transform:scaleX(0.9592)">損益</span></span>
<span class="t" style="left:168.60px;top:484.20px;font-size:11.2px;color:#222;"><span class="r" style="width:78.90px;transform:scaleX(0.7686)">2025.12.23 09:17:02</span></span>
<span class="t" style="left:303.00px;top:484.20px;font-size:11.2px;color:#222;"><span class="r" style="width:12.20px;transform:scaleX(0.7263)">sell</span></span>
<span class="t" style="left:352.50px;top:484.20px;font-size:11.2px;color:#222;"><span class="r" style="width:16.70px;transform:scaleX(0.7667)">0.04</span></span>
<span class="t" style="left:407.20px;top:484.20px;font-size:11.2px;color:#222;"><span class="r" style="width:30.00px;transform:scaleX(0.8170)">audcad</span></span>
<span class="t" style="left:482.80px;top:484.20px;font-size:11.2px;color:#222;"><span class="r" style="width:31.30px;transform:scaleX(0.7737)">0.91656</span></span>
<span class="t" style="left:559.40px;top:484.20px;font-size:11.2px;color:#222;"><span class="r" style="width:31.50px;transform:scaleX(0.7787)">0.00000</span></span>
<span class="t" style="left:635.40px;top:484.20px;font-size:11.2px;color:#222;"><span class="r" style="width:31.50px;transform:scaleX(0.7787)">0.00000</span></span>
<span class="t" style="left:712.20px;top:484.20px;font-size:11.2px;color:#222;"><span class="r" style="width:30.90px;transform:scaleX(0.7638)">0.93054</span></span>
<span class="t" style="left:806.90px;top:484.20px;font-size:11.2px;color:#222;"><span class="r" style="width:12.90px;transform:scaleX(0.7977)">-76</span></span>
<span class="t" style="left:878.40px;top:484.20px;font-size:11.2px;color:#222;"><span class="r" style="width:17.50px;transform:scaleX(0.7810)">-607</span></span>
<span class="t" style="left:976.50px;top:484.20px;font-size:11.2px;color:#222;"><span class="r" style="width:24.70px;transform:scaleX(0.7783)">-6 348</span></span>
<span class="t" style="left:31.20px;top:500.70px;font-size:9.3px;color:#000;font-weight:bold;"><span class="r" style="width:17.42px;transform:scaleX(0.9360)">残高</span><span class="r" style="font-size:11px;width:57.28px;transform:scaleX(0.8143)">: 300 667 JPY</span></span>
<span class="t" style="left:113.30px;top:500.70px;font-size:9.3px;color:#000;font-weight:bold;"><span class="r" style="width:46.37px;transform:scaleX(0.9972)">有効証拠金</span><span class="r" style="font-size:11px;width:40.33px;transform:scaleX(0.8676)">: 293 636</span></span>
<span class="t" style="left:206.40px;top:500.70px;font-size:9.3px;color:#000;font-weight:bold;"><span class="r" style="width:45.60px;transform:scaleX(0.9807)">必要証拠金</span><span class="r" style="font-size:11px;width:21.40px;transform:scaleX(0.8532)">: 833</span></span>
<span class="t" style="left:280.00px;top:500.70px;font-size:9.3px;color:#000;font-weight:bold;"><span class="r" style="width:46.32px;transform:scaleX(0.9961)">余剰証拠金</span><span class="r" style="font-size:11px;width:40.28px;transform:scaleX(0.8666)">: 292 803</span></span>
<span class="t" style="left:373.00px;top:500.70px;font-size:9.3px;color:#000;font-weight:bold;"><span class="r" style="width:55.45px;transform:scaleX(0.9939)">証拠金維持率</span><span class="r" style="font-size:11px;width:53.95px;transform:scaleX(0.8647)">: 35232.66%</span></span>
<span class="t" style="left:975.20px;top:500.70px;font-size:11px;color:#000;font-weight:bold;"><span class="r" style="width:25.50px;transform:scaleX(0.8172)">-7 031</span></span>
<span class="t" style="left:24.00px;top:593.70px;font-size:9.4px;color:#000;"><span class="r" style="width:18.00px;transform:scaleX(0.9592)">取引</span></span>
<span class="t" style="left:58.00px;top:593.70px;font-size:9.4px;color:#555;"><span class="r" style="width:38.00px;transform:scaleX(1.0129)">運用比率</span></span>
<span class="t" style="left:113.00px;top:593.70px;font-size:9.4px;color:#555;"><span class="r" style="width:37.50px;transform:scaleX(0.9996)">口座履歴</span></span>
<span class="t" style="left:167.00px;top:593.70px;font-size:9.4px;color:#555;"><span class="r" style="width:26.00px;transform:scaleX(0.7021)">ニュース</span></span>
<span class="t" style="left:209.50px;top:593.70px;font-size:9.4px;color:#555;"><span class="r" style="width:27.05px;transform:scaleX(0.7269)">アラーム</span><span class="r" style="width:18.95px;transform:scaleX(1.0096)">設定</span></span>
<span class="t" style="left:271.00px;top:593.70px;font-size:9.4px;color:#555;"><span class="r" style="width:48.50px;transform:scaleX(0.7421)">メールボックス</span></span>
<span class="t" style="left:345.50px;top:593.70px;font-size:9.4px;color:#555;"><span class="r" style="width:33.00px;transform:scaleX(0.7038)">マーケット</span></span>
<span class="t" style="left:407.50px;top:593.70px;font-size:9.4px;color:#555;"><span class="r" style="width:29.50px;transform:scaleX(0.7863)">シグナル</span></span>
<span class="t" style="left:454.00px;top:593.70px;font-size:9.4px;color:#555;"><span class="r" style="width:18.50px;transform:scaleX(0.9858)">記事</span></span>
<span class="t" style="left:488.50px;top:593.70px;font-size:9.4px;color:#555;"><span class="r" style="width:34.00px;transform:scaleX(0.7251)">ライブラリ</span></span>
<span class="t" style="left:538.00px;top:593.70px;font-size:9.4px;color:#555;"><span class="r" style="width:43.00px;transform:scaleX(0.7681)">エキスパート</span></span>
<span class="t" style="left:596.00px;top:593.70px;font-size:9.4px;color:#555;"><span class="r" style="width:38.00px;transform:scaleX(1.0129)">操作履歴</span></span>
<span class="t" style="left:322.00px;top:598.20px;font-size:7px;color:#e02020;font-weight:bold;"><span class="r" style="width:7.50px;transform:scaleX(0.9619)">19</span></span>
<span class="t" style="left:379.50px;top:598.20px;font-size:7px;color:#e02020;font-weight:bold;"><span class="r" style="width:12.00px;transform:scaleX(1.0267)">105</span></span>
<svg style="left:0;top:0" width="1024" height="630" viewBox="0 0 1024 630"><path d="M0 610.2H1024" stroke="#b4b4b4" stroke-width="0.9"/><path d="M457.3 613.6V628M550.1 613.6V628M631.3 613.6V628M687.6 613.6V628M744.7 613.6V628M798.6 613.6V628M853.4 613.6V628M905.6 613.6V628" stroke="#c0c0c0" stroke-width="0.9"/><rect x="910.30" y="615.7" width="1.5" height="10.1" fill="#7a9a24"/><rect x="910.30" y="623.20" width="1.5" height="2.60" fill="#1d5880"/><rect x="912.66" y="615.7" width="1.5" height="10.1" fill="#7a9a24"/><rect x="912.66" y="622.15" width="1.5" height="3.65" fill="#1d5880"/><rect x="915.02" y="615.7" width="1.5" height="10.1" fill="#7a9a24"/><rect x="915.02" y="621.10" width="1.5" height="4.70" fill="#1d5880"/><rect x="917.38" y="615.7" width="1.5" height="10.1" fill="#7a9a24"/><rect x="917.38" y="620.05" width="1.5" height="5.75" fill="#1d5880"/><rect x="919.74" y="615.7" width="1.5" height="10.1" fill="#7a9a24"/><rect x="919.74" y="619.00" width="1.5" height="6.80" fill="#1d5880"/><rect x="922.10" y="615.7" width="1.5" height="10.1" fill="#7a9a24"/><rect x="922.10" y="617.95" width="1.5" height="7.85" fill="#1d5880"/><rect x="924.46" y="615.7" width="1.5" height="10.1" fill="#7a9a24"/><rect x="924.46" y="616.90" width="1.5" height="8.90" fill="#1d5880"/><rect x="926.82" y="615.7" width="1.5" height="10.1" fill="#7a9a24"/><rect x="926.82" y="615.85" width="1.5" height="9.95" fill="#1d5880"/><path d="M1013 628.6l9-9M1016 628.6l6-6M1019 628.6l3-3" stroke="#a8a8a8" stroke-width="0.9"/><path d="M0.4 0V630M1023.3 0V630" stroke="#3b4a60" stroke-width="1.4"/><path d="M0 0.4H1024M0 629.6H1024" stroke="#333d4e" stroke-width="1"/></svg>
<span class="t" style="left:2.40px;top:615.90px;font-size:9.6px;color:#000;"><span class="r" style="font-size:10.2px;width:10.06px;transform:scaleX(0.8456)">F1</span><span class="r" style="width:51.68px;transform:scaleX(0.7760)">キーでヘルプが</span><span class="r" style="width:19.09px;transform:scaleX(0.9949)">表示</span><span class="r" style="width:29.78px;transform:scaleX(0.7760)">されます</span></span>
<span class="t" style="left:462.40px;top:615.70px;font-size:9.4px;color:#000;"><span class="r" style="font-size:10.6px;width:30.00px;transform:scaleX(0.8934)">Default</span></span>
<span class="t" style="left:932.50px;top:615.70px;font-size:9.4px;color:#000;"><span class="r" style="font-size:10.6px;width:71.70px;transform:scaleX(0.8394)">-1506377/1738 kb</span></span>
</div>
</body></html>
